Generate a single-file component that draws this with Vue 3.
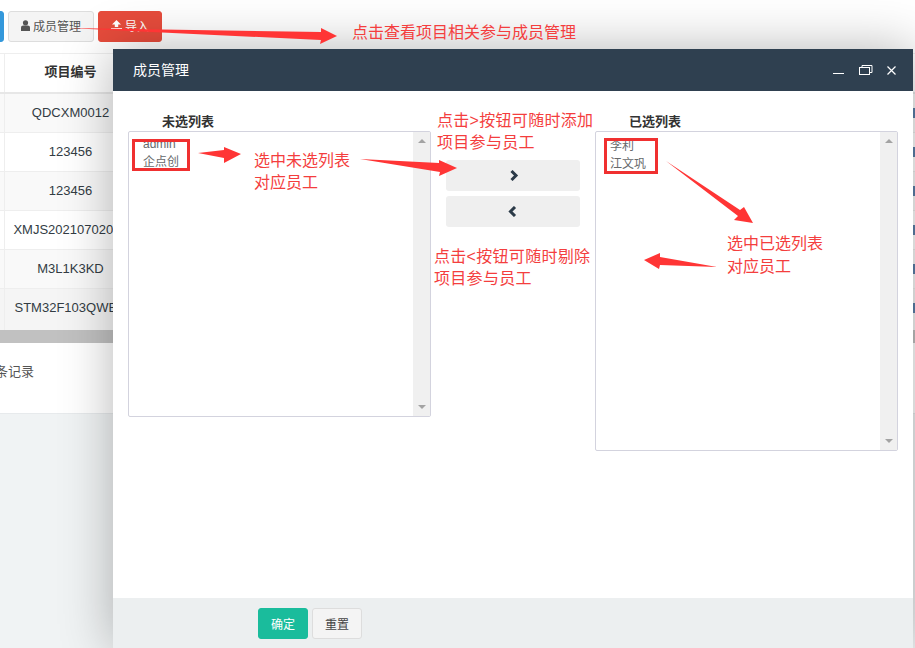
<script setup>
const rows = ['QDCXM0012', '123456', '123456', 'XMJS20210702001', 'M3L1K3KD', 'STM32F103QWER']
const leftItems = ['admin', '企点创']
const rightItems = ['李利', '江文巩']
</script>

<template>
  <div class="page">
    <div class="toolbar">
      <button class="tb blue"></button>
      <button class="tb plain">
        <svg class="ic" width="9" height="11" viewBox="0 0 9 11"><circle cx="4.5" cy="2.8" r="2.6" fill="#555"/><path d="M0 11V7.6C0 6.4 1 5.6 2.2 5.6h4.6C8 5.6 9 6.4 9 7.6V11z" fill="#555"/></svg>
        成员管理
      </button>
      <button class="tb red">
        <svg class="ic" width="11" height="10" viewBox="0 0 11 10"><path d="M5.5 0L10 4.4H7.2V7H3.8V4.4H1z" fill="#fff"/><rect x="0" y="8" width="11" height="2" fill="#fff"/></svg>
        导入
      </button>
    </div>

    <div class="table">
      <div class="thead"><div class="edge"></div><div class="cell head">项目编号</div></div>
      <div v-for="(r, i) in rows" :key="i" class="row" :class="{ odd: i % 2 === 0, last: i === 5 }">
        <div class="edge"></div>
        <div class="cell">{{ r }}</div>
        <i class="mark"></i>
      </div>
    </div>
    <div class="hscroll"></div>
    <div class="pager"><span class="count">条记录</span></div>

    <section class="modal">
      <header class="m-head">
        <span class="m-title">成员管理</span>
        <div class="m-tools">
          <svg width="12" height="10" viewBox="0 0 12 10"><rect x="0" y="8" width="11" height="1" fill="#fff"/></svg>
          <svg width="14" height="10" viewBox="0 0 14 10" fill="none" stroke="#fff"><rect x="0.5" y="2.5" width="10" height="7"/><path d="M3 2.5V0.5H13V7.5H10.5"/></svg>
          <svg width="9" height="9" viewBox="0 0 9 9" fill="none" stroke="#fff" stroke-width="1.2"><path d="M0.5 0.5L8.5 8.5M8.5 0.5L0.5 8.5"/></svg>
        </div>
      </header>
      <div class="m-body">
        <div class="col">
          <div class="label">未选列表</div>
          <div class="list short">
            <div class="items"><div v-for="t in leftItems" :key="t">{{ t }}</div></div>
            <div class="sbar"><i class="up"></i><i class="down"></i></div>
          </div>
        </div>
        <div class="mid">
          <button class="mv">
            <svg class="next" width="10" height="11" viewBox="0 0 10 11" fill="none" stroke="#2b3a48" stroke-width="3"><path d="M2.5 1L7 5.5L2.5 10"/></svg>
          </button>
          <button class="mv">
            <svg width="10" height="11" viewBox="0 0 10 11" fill="none" stroke="#2b3a48" stroke-width="3"><path d="M7 1L2.5 5.5L7 10"/></svg>
          </button>
        </div>
        <div class="col">
          <div class="label">已选列表</div>
          <div class="list tall">
            <div class="items second"><div v-for="t in rightItems" :key="t">{{ t }}</div></div>
            <div class="sbar"><i class="up"></i><i class="down"></i></div>
          </div>
        </div>
      </div>
      <footer class="m-foot">
        <button class="f-btn ok">确定</button>
        <button class="f-btn reset">重置</button>
      </footer>
    </section>

    <svg class="marks" width="915" height="648" viewBox="0 0 915 648">
      <g fill="#ff3535">
        <polygon points="68,28 321,32 321,28 337,36 320,44 321,40"/>
        <polygon points="198,153 224,150 224,147 241,154 224,163 224,158"/>
        <polygon points="360,159 439,163 439,160 457,168 439,176 440,172"/>
        <polygon points="666,161 740,210 744,207 753,223 734,220 738,216"/>
        <polygon points="717,267 660,257 660,253 644,260 659,269 660,265"/>
      </g>
      <g fill="none" stroke="#f03030" stroke-width="3">
        <rect x="133.5" y="140.5" width="55" height="29"/>
        <rect x="605.5" y="139.5" width="51" height="33"/>
      </g>
    </svg>

    <div class="note n1">点击查看项目相关参与成员管理</div>
    <div class="note n2">选中未选列表<br>对应员工</div>
    <div class="note n3">点击&gt;按钮可随时添加<br>项目参与员工</div>
    <div class="note n4">点击&lt;按钮可随时剔除<br>项目参与员工</div>
    <div class="note n5">选中已选列表<br>对应员工</div>
  </div>
</template>

<style>
html, body { margin: 0; padding: 0; background: #fff; }
</style>

<style scoped>
.page {
  position: relative;
  width: 915px;
  height: 648px;
  overflow: hidden;
  background: #f0f3f4;
  font-family: "Liberation Sans", "Noto Sans CJK SC", sans-serif;
  font-size: 13px;
  color: #676a6c;
}
button { font-family: inherit; cursor: pointer; padding: 0; }
.toolbar {
  display: flex;
  gap: 4px;
  height: 53px;
  padding-top: 11px;
  box-sizing: border-box;
  background: #fff;
  margin-left: -21px;
}
.tb {
  height: 31px;
  box-sizing: border-box;
  border-radius: 3px;
  font-size: 12px;
  display: flex;
  align-items: center;
  justify-content: center;
  gap: 3px;
  padding-bottom: 3px;
}
.blue { width: 25px; background: #3498db; border: 1px solid #3498db; }
.plain { width: 86px; background: #f4f4f4; border: 1px solid #ddd; color: #555; }
.red { width: 64px; background: #e74c3c; border: 1px solid #e74c3c; color: #fff; }
.table { background: #fff; }
.thead, .row { display: flex; align-items: stretch; position: relative; box-sizing: border-box; }
.thead { height: 41px; border-top: 1px solid #eee; border-bottom: 2px solid #e7e7e7; background: #fff; }
.row { height: 39px; border-bottom: 1px solid #eee; background: #fff; }
.row.odd { background: #f9f9f9; }
.row.last { height: 41px; background: #f5f5f5; border-bottom: none; }
.edge { width: 4px; border-right: 1px solid #eee; }
.cell {
  width: 131px;
  box-sizing: border-box;
  display: flex;
  align-items: center;
  justify-content: center;
  padding-bottom: 2px;
  white-space: nowrap;
  overflow: hidden;
  color: #333c44;
}
.row.last .cell { padding-bottom: 4px; }
.head { font-weight: 700; color: #333; padding-bottom: 5px; }
.mark { position: absolute; right: 0; top: 14px; width: 2px; height: 10px; background: #5b7fa8; }
.hscroll { height: 13px; background: #c1c1c1; }
.pager {
  height: 71px;
  box-sizing: border-box;
  background: #fff;
  border-bottom: 1px solid #e7eaec;
  padding-top: 21px;
  line-height: 16px;
}
.count { display: block; margin-left: -5px; color: #555; }

.modal {
  position: absolute;
  left: 113px;
  top: 49px;
  width: 800px;
  height: 599px;
  display: flex;
  flex-direction: column;
  background: #fff;
  box-shadow: 1px 1px 50px rgba(0, 0, 0, 0.3);
}
.m-head {
  height: 42px;
  flex: none;
  box-sizing: border-box;
  background: #2f4050;
  display: flex;
  align-items: center;
  justify-content: space-between;
  padding: 0 17px 2px 20px;
}
.m-title { color: #fff; font-size: 14px; }
.m-tools { display: flex; align-items: center; gap: 14px; padding-top: 2px; }
.m-body {
  flex: 1;
  display: flex;
  gap: 15px;
  padding: 20px 15px 0;
}
.col { width: 303px; }
.label {
  height: 20px;
  line-height: 21px;
  padding-left: 34px;
  font-size: 13px;
  font-weight: 700;
  color: #333;
}
.list {
  display: flex;
  box-sizing: border-box;
  border: 1px solid #d3d3de;
  border-radius: 2px;
}
.short { height: 286px; }
.tall { height: 320px; }
.items {
  flex: 1;
  padding: 3px 0 0 14px;
  font-size: 12px;
  line-height: 18px;
  color: #676a6c;
}
.items.second { padding-top: 5px; }
.sbar {
  width: 17px;
  background: #f0f0f0;
  display: flex;
  flex-direction: column;
  justify-content: space-between;
  align-items: center;
  padding: 7px 0;
}
.up, .down { width: 0; height: 0; border-left: 4px solid transparent; border-right: 4px solid transparent; }
.up { border-bottom: 4px solid #a3a3a3; }
.down { border-top: 4px solid #a3a3a3; }
.mid {
  width: 134px;
  display: flex;
  flex-direction: column;
  gap: 5px;
  padding-top: 49px;
}
.mv {
  height: 31px;
  background: #efefef;
  border: none;
  border-radius: 3px;
  display: flex;
  align-items: center;
  justify-content: center;
}
.next { margin-left: 2px; }
.m-foot {
  height: 50px;
  flex: none;
  box-sizing: border-box;
  background: #ecefF0;
  display: flex;
  gap: 4px;
  padding: 10px 0 0 145px;
}
.f-btn {
  width: 50px;
  height: 31px;
  box-sizing: border-box;
  border-radius: 3px;
  font-size: 12px;
}
.ok { background: #1abc9c; border: 1px solid #1abc9c; color: #fff; }
.reset { background: #f4f4f4; border: 1px solid #ddd; color: #444; }

.marks { position: absolute; left: 0; top: 0; pointer-events: none; }
.note {
  position: absolute;
  color: #f43e3e;
  font-size: 16px;
  line-height: 22px;
  white-space: nowrap;
}
.n1 { left: 352px; top: 22px; }
.n2 { left: 254px; top: 150px; }
.n3 { left: 437px; top: 110px; letter-spacing: 0.3px; }
.n4 { left: 434px; top: 246px; letter-spacing: 0.3px; }
.n5 { left: 727px; top: 232px; line-height: 23px; }
</style>
